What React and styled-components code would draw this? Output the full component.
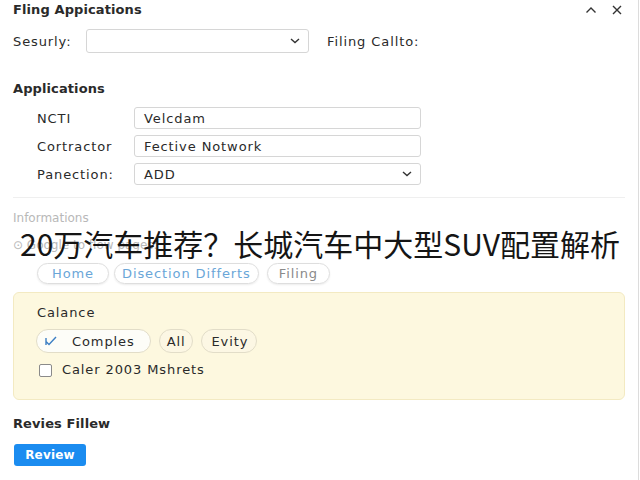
import React from "react";
import styled, { createGlobalStyle } from "styled-components";

const Global = createGlobalStyle`
  html, body { margin: 0; padding: 0; background: #fff; }
  body { font-family: "DejaVu Sans", Verdana, sans-serif; font-size: 13px; letter-spacing: 0.9px; color: #222; }
`;

const Page = styled.div`
  position: relative;
  width: 639px;
  height: 480px;
  border-right: 1px solid #dcdcdc;
  overflow: hidden;
  box-sizing: border-box;
  padding: 0 13px;
`;

const Header = styled.div`
  display: flex;
  align-items: center;
  justify-content: space-between;
  height: 19px;
`;

const Title = styled.div`
  font-weight: bold;
  font-size: 13px;
  letter-spacing: 0.1px;
  color: #2a2a2a;
`;

const HeaderIcons = styled.div`
  display: flex;
  gap: 15px;
  align-items: center;
  margin-right: 3px;
  color: #333;
`;

const TopRow = styled.div`
  display: flex;
  align-items: center;
  margin-top: 10px;
`;

const Label = styled.span`
  color: #2a2a2a;
  width: ${(p) => p.$w || "auto"};
  margin-left: ${(p) => p.$ml || "0"};
  flex: none;
`;

const SelectBox = styled.div`
  box-sizing: border-box;
  width: ${(p) => p.$w};
  height: ${(p) => p.$h};
  border: 1px solid #d6d6d6;
  border-radius: 3px;
  display: flex;
  align-items: center;
  justify-content: space-between;
  padding: 0 8px 0 9px;
  background: #fff;
  color: #2a2a2a;
`;

const SectionTitle = styled.div`
  font-weight: bold;
  font-size: 13px;
  letter-spacing: 0.1px;
  line-height: 16px;
  color: #2a2a2a;
  margin-top: ${(p) => p.$mt};
`;

const FormGrid = styled.div`
  display: grid;
  grid-template-columns: 97px 287px;
  row-gap: 6px;
  margin: 10px 0 0 24px;
  align-items: center;
`;

const Input = styled.div`
  box-sizing: border-box;
  height: 22px;
  border: 1px solid #d6d6d6;
  border-radius: 3px;
  display: flex;
  align-items: center;
  padding: 0 9px;
  color: #2a2a2a;
`;

const Divider = styled.div`
  height: 1px;
  background: #efefef;
  margin-top: 12px;
`;

const Muted = styled.div`
  color: #b8b8b8;
  font-size: 12px;
  letter-spacing: 0;
  line-height: 16px;
  margin-top: ${(p) => p.$mt};
  display: flex;
  align-items: center;
  gap: 4px;
`;

const Tabs = styled.div`
  display: flex;
  gap: 5px;
  margin: 10px 0 0 24px;
`;

const Tab = styled.div`
  box-sizing: border-box;
  height: 21px;
  padding: 0 ${(p) => p.$px};
  border: 1px solid #dedede;
  border-radius: 11px;
  box-shadow: 0 1px 2px rgba(0,0,0,0.08);
  display: flex;
  align-items: center;
  color: ${(p) => (p.$active ? "#6aa6d8" : "#8a8a8a")};
  margin-right: ${(p) => p.$mr || "0"};
`;

const Card = styled.div`
  box-sizing: border-box;
  height: 108px;
  margin-top: 8px;
  background: #fdf8df;
  border: 1px solid #f3eac2;
  border-radius: 6px;
  padding: 12px 0 0 23px;
`;

const CardLabel = styled.div`
  line-height: 16px;
  color: #2a2a2a;
`;

const Chips = styled.div`
  display: flex;
  gap: 8px;
  margin-top: 8px;
  margin-left: -1px;
`;

const Chip = styled.div`
  box-sizing: border-box;
  height: 24px;
  border: 1px solid #e2ddc8;
  border-radius: 12px;
  background: ${(p) => (p.$on ? "#fdfdf8" : "#fcf7e4")};
  display: flex;
  align-items: center;
  gap: 15px;
  padding: 0 ${(p) => p.$pr || "7px"} 0 ${(p) => p.$pl || "7px"};
  color: #2a2a2a;
`;

const CheckRow = styled.div`
  display: flex;
  align-items: center;
  gap: 10px;
  margin-top: 9px;
  margin-left: 2px;
  line-height: 16px;
  color: #2a2a2a;
`;

const Box = styled.span`
  box-sizing: border-box;
  width: 13px;
  height: 13px;
  border: 1px solid #8a8a8a;
  border-radius: 2px;
  background: #fff;
`;

const Button = styled.button`
  margin-top: 12px;
  width: 72px;
  height: 22px;
  border: none;
  border-radius: 3px;
  background: #1b8cf0;
  color: #fff;
  font-family: "DejaVu Sans", Verdana, sans-serif;
  font-weight: bold;
  font-size: 12px;
  letter-spacing: 0.2px;
  padding: 0;
  display: block;
  margin-left: 1px;
`;

const Caption = styled.div`
  position: absolute;
  left: 20px;
  top: 223px;
  font-family: "Noto Sans CJK SC", "Noto Sans", sans-serif;
  font-size: 30px;
  line-height: 40px;
  letter-spacing: 0;
  color: #151515;
  white-space: nowrap;
`;

const ChevronDown = () => (
  <svg width="10" height="6" viewBox="0 0 10 6">
    <path d="M1 1l4 3.5L9 1" fill="none" stroke="#333" strokeWidth="1.4" />
  </svg>
);

export default function App() {
  return (
    <>
      <Global />
      <Page>
        <Header>
          <Title>Fling Appications</Title>
          <HeaderIcons>
            <svg width="12" height="8" viewBox="0 0 12 8">
              <path d="M1.5 6.5L6 2l4.5 4.5" fill="none" stroke="#333" strokeWidth="1.4" />
            </svg>
            <svg width="10" height="10" viewBox="0 0 10 10">
              <path d="M1 1l8 8M9 1l-8 8" stroke="#333" strokeWidth="1.4" />
            </svg>
          </HeaderIcons>
        </Header>

        <TopRow>
          <Label $w="73px">Sesurly:</Label>
          <SelectBox $w="223px" $h="24px">
            <span />
            <ChevronDown />
          </SelectBox>
          <Label $ml="18px">Filing Callto:</Label>
        </TopRow>

        <SectionTitle $mt="28px">Applications</SectionTitle>
        <FormGrid>
          <Label>NCTI</Label>
          <Input>Velcdam</Input>
          <Label>Cortractor</Label>
          <Input>Fective Notwork</Input>
          <Label>Panection:</Label>
          <SelectBox $w="287px" $h="22px">
            <span>ADD</span>
            <ChevronDown />
          </SelectBox>
        </FormGrid>

        <Divider />
        <Muted $mt="12px">Informations</Muted>
        <Muted $mt="11px">⊙ Google to flow pages:</Muted>

        <Tabs>
          <Tab $active $px="14px">Home</Tab>
          <Tab $active $px="7px" $mr="3px">Disection Differts</Tab>
          <Tab $px="11px">Filing</Tab>
        </Tabs>

        <Card>
          <CardLabel>Calance</CardLabel>
          <Chips>
            <Chip $on $pl="8px" $pr="15px">
              <svg width="12" height="10" viewBox="0 0 12 10">
                <path d="M1 2v7M1 5.5l3 3L11 1" fill="none" stroke="#3d7fc4" strokeWidth="1.4" />
              </svg>
              <span>Comples</span>
            </Chip>
            <Chip>All</Chip>
            <Chip $pl="9px" $pr="8px">Evity</Chip>
          </Chips>
          <CheckRow>
            <Box />
            Caler 2003 Mshrets
          </CheckRow>
        </Card>

        <SectionTitle $mt="16px">Revies Fillew</SectionTitle>
        <Button>Review</Button>

        <Caption>20万汽车推荐？长城汽车中大型SUV配置解析</Caption>
      </Page>
    </>
  );
}
